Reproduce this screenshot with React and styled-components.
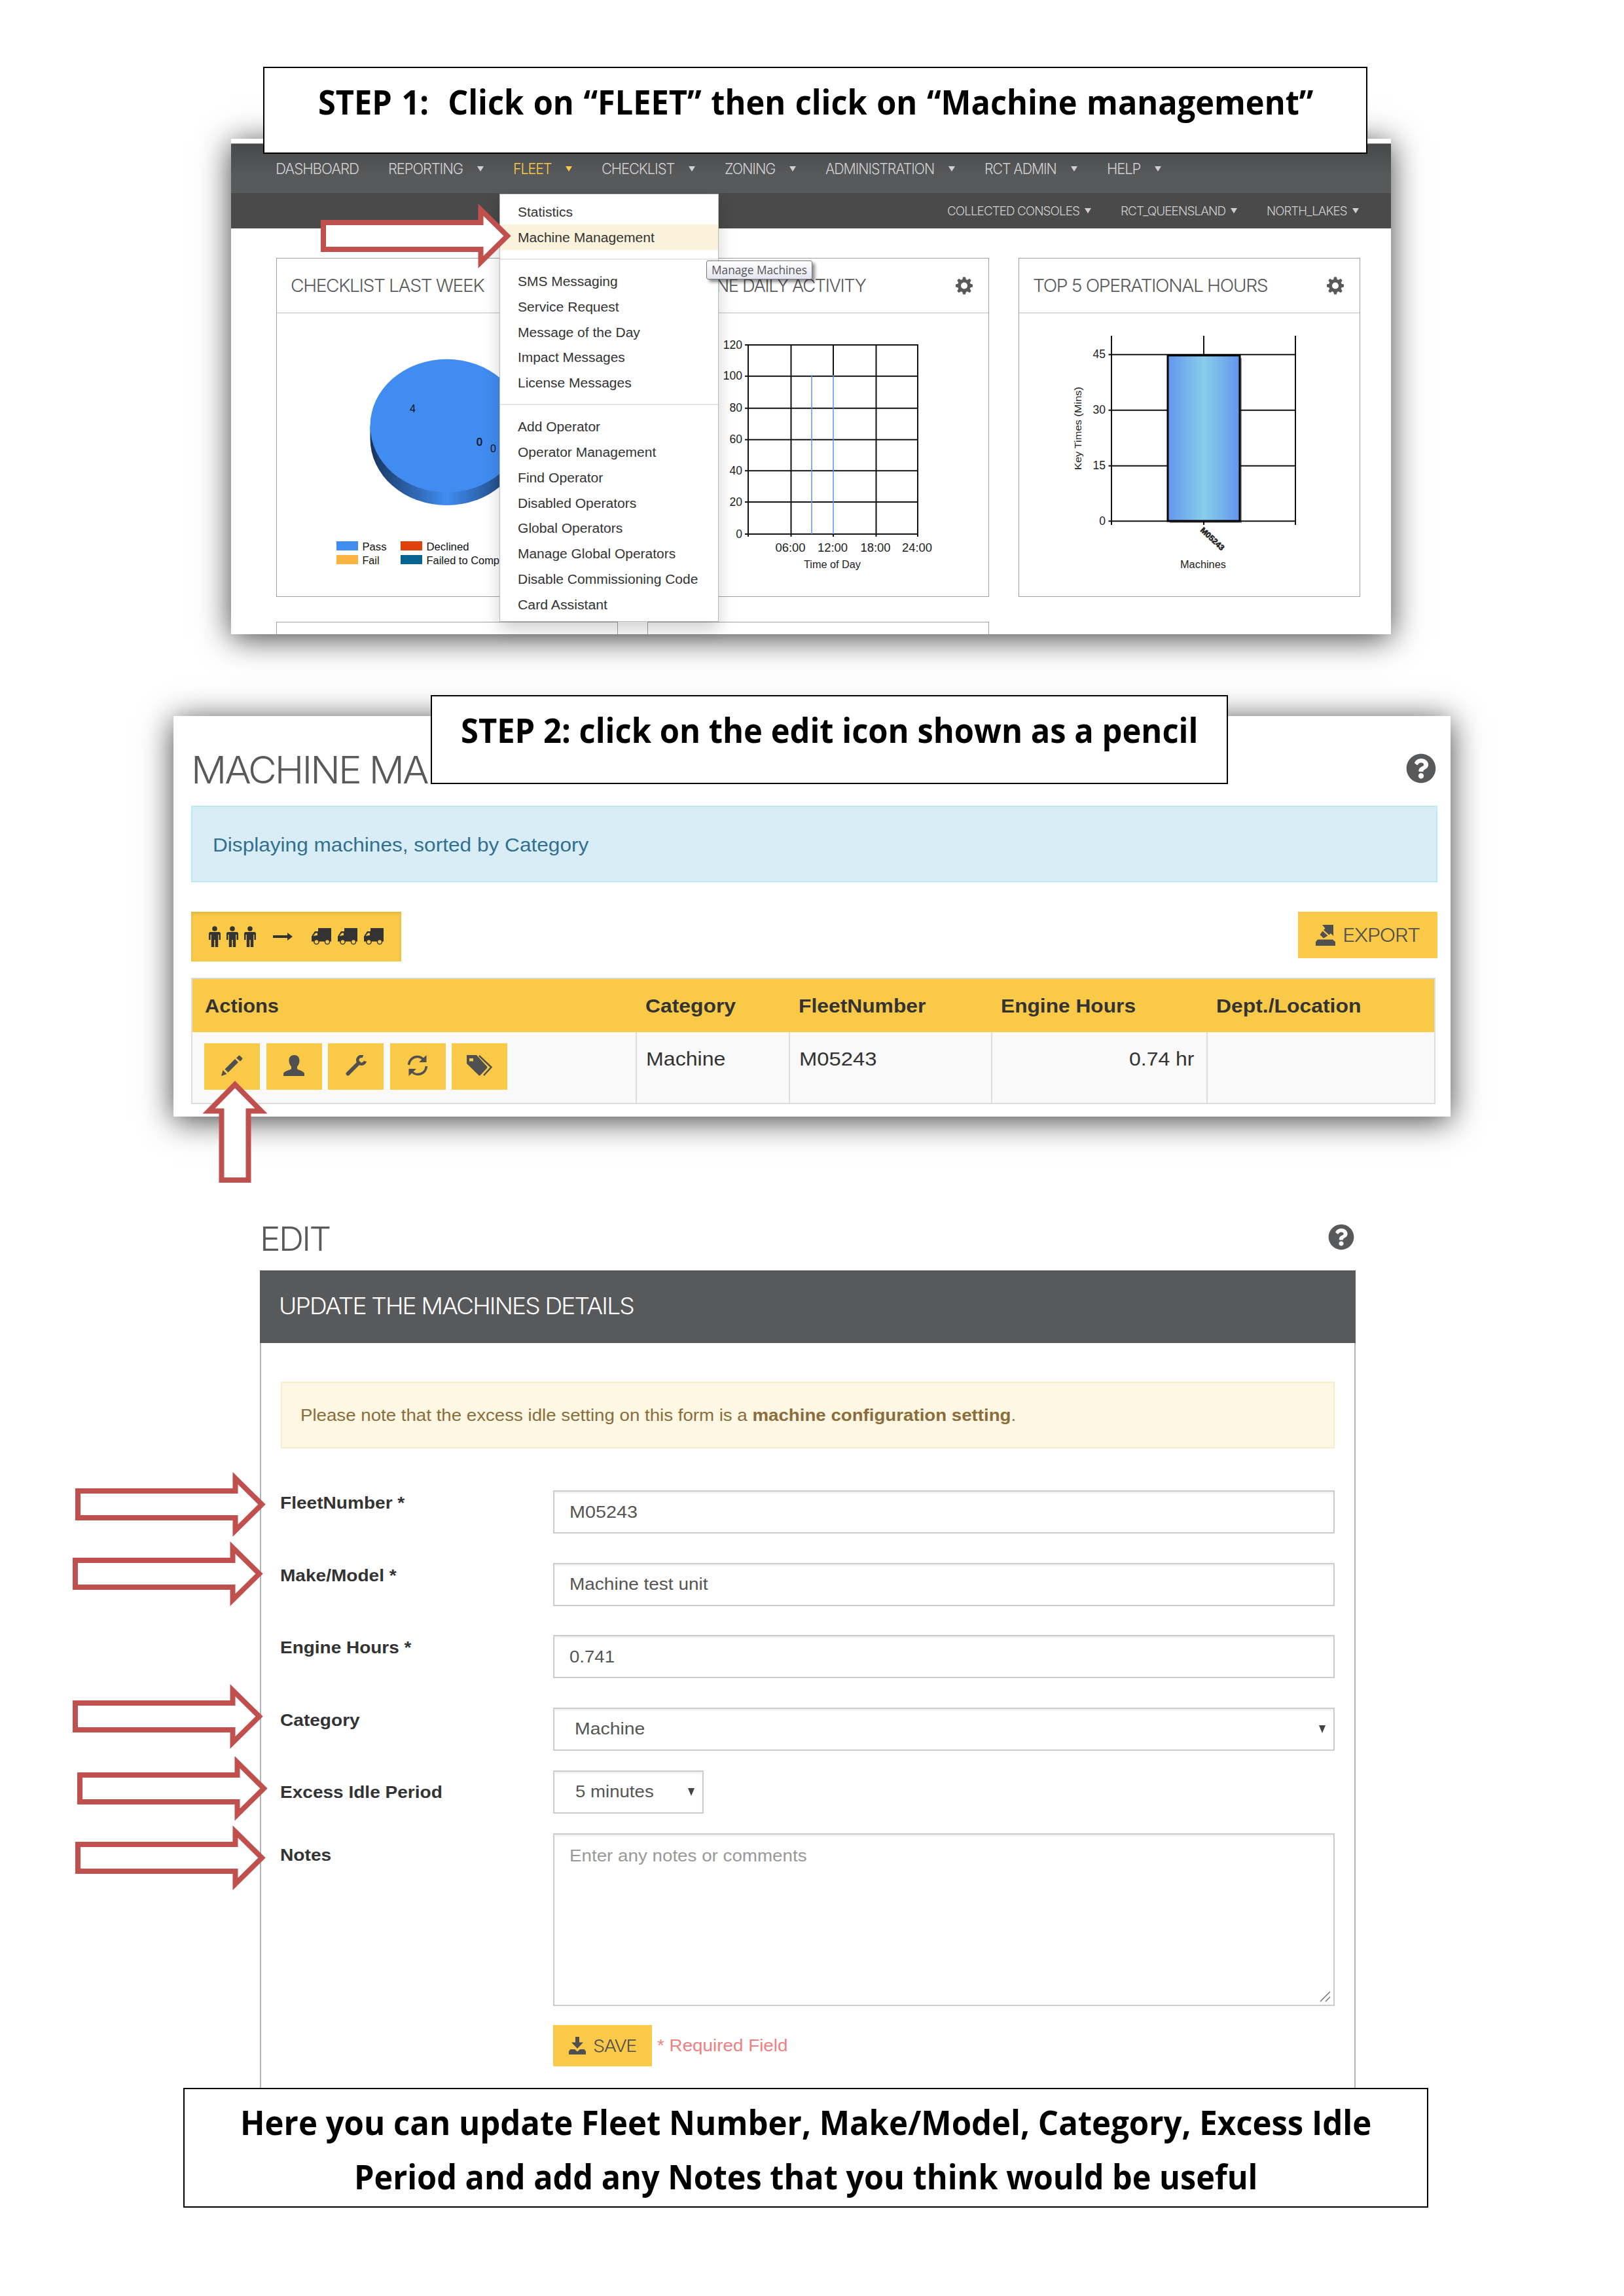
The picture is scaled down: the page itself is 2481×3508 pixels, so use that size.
import { useLayoutEffect, useRef, useState } from 'react';
import styled, { createGlobalStyle } from 'styled-components';
import { FaQuestionCircle } from 'react-icons/fa';

const sans = '"Liberation Sans", Arial, sans-serif';
const light = 'Inter, "Liberation Sans", sans-serif';

const GlobalStyle = createGlobalStyle`
  * {
    box-sizing: border-box;
  }

  body {
    margin: 0;
    background: #fff;
    font-family: ${sans};
  }
`;

const Page = styled.main`
  position: relative;
  display: flex;
  flex-direction: column;
  width: 2481px;
  height: 3508px;
  overflow: hidden;
  background: #fff;
`;

/* text fitted to a given width */

const FitBox = styled.span`
  display: inline-block;
  width: ${({ $width }) => $width}px;
  white-space: pre;
  text-align: left;
  flex: none;
`;

const FitText = styled.span`
  display: inline-block;
  transform-origin: 0 50%;
`;

const Fit = ({ width, children }) => {
  const ref = useRef(null);
  const [scale, setScale] = useState(1);

  useLayoutEffect(() => {
    setScale(width / ref.current.offsetWidth);
  }, [width]);

  return (
    <FitBox $width={width}>
      <FitText ref={ref} style={{ transform: `scaleX(${scale})` }}>
        {children}
      </FitText>
    </FitBox>
  );
};

/* callouts and arrows that lie over the screens */

const Callout = styled.div`
  border: 2px solid #000;
  background: #fff;
  color: #000;
  font-family: 'Open Sans', 'Noto Sans', sans-serif;
  font-size: 52px;
  font-weight: 700;
  line-height: 83px;
  text-align: center;
`;

const StepOne = styled(Callout)`
  position: absolute;
  left: 402px;
  top: 102px;
  width: 1687px;
  height: 133px;
  padding-top: 9px;
  word-spacing: 2px;
`;

const StepTwo = styled(Callout)`
  position: absolute;
  left: 658px;
  top: 1062px;
  width: 1218px;
  height: 136px;
  padding-top: 9px;
`;

const Summary = styled(Callout)`
  position: relative;
  display: flex;
  flex-direction: column;
  align-items: center;
  flex: none;
  width: 1902px;
  height: 183px;
  margin-left: 280px;
  padding-top: 8px;
`;

const ArrowSvg = styled.svg`
  position: absolute;
  left: ${({ $x }) => $x}px;
  top: ${({ $y }) => $y}px;
  fill: #fff;
  stroke: #c0504d;
  stroke-width: 8;
  stroke-miterlimit: 5;
`;

const RightArrow = ({ x, y }) => (
  <ArrowSvg $x={x} $y={y} width="291" height="101" viewBox="0 0 291 101">
    <path d="M4 30H244.500V10.500L285 50.500L244.500 90.500V71H4Z" />
  </ArrowSvg>
);

const UpArrow = ({ x, y }) => (
  <ArrowSvg $x={x} $y={y} width="100" height="156" viewBox="0 0 100 156">
    <path d="M29.500 152V46.500H10L50 6L90 46.500H70.500V152Z" />
  </ArrowSvg>
);

/* step 1: dashboard */

const Screen = styled.section`
  position: relative;
  flex: none;
  background: #fff;
  box-shadow: 0 6px 46px rgba(0, 0, 0, 0.75);
`;

const Dashboard = styled(Screen)`
  width: 1772px;
  height: 757px;
  margin: 212px 0 0 353px;
  padding-top: 7px;
`;

const NavBar = styled.nav`
  display: flex;
  align-items: center;
  gap: 45px;
  height: 76px;
  padding-left: 68px;
  border-top: 1px solid #888;
  background: linear-gradient(#48494a, #58595b 65%);
  font-family: ${light};
  font-size: 22.5px;
  font-weight: 300;
  letter-spacing: -0.05em;
`;

const NavItem = styled.span`
  display: flex;
  align-items: center;
  gap: ${({ $gap }) => $gap || 22}px;
  color: ${({ $active }) => ($active ? '#f9c947' : '#d0d0d0')};
`;

const Caret = styled.i`
  border: 5.5px solid transparent;
  border-top: 8px solid currentColor;
  border-bottom: 0;
`;

const SubNav = styled.div`
  display: flex;
  align-items: center;
  justify-content: flex-end;
  gap: 45px;
  height: 54px;
  padding-right: 49px;
  background: #4a4a4a;
  font-family: ${light};
  font-size: 18.5px;
  font-weight: 300;
  letter-spacing: -0.05em;
`;

const Cards = styled.div`
  display: grid;
  grid-template-columns: repeat(3, 521.500px);
  grid-template-rows: 518px 100px;
  gap: 38px 45.500px;
  height: 620px;
  padding: 45px 0 0 69px;
  overflow: hidden;
`;

const Card = styled.article`
  border: 1px solid #a0a0a0;
  background: #fff;
`;

const CardHeader = styled.header`
  display: flex;
  align-items: center;
  justify-content: space-between;
  height: 84px;
  padding: 0 24px 0 21px;
  border-bottom: 2px solid #ddd;
  color: #58595b;
  font-family: ${light};
  font-size: 27px;
  font-weight: 300;
  letter-spacing: -0.05em;
`;

const Chart = styled.svg`
  display: block;
  font-family: ${sans};
`;

const Menu = styled.ul`
  position: absolute;
  left: 410px;
  top: 84px;
  width: 335px;
  height: 654px;
  margin: 0;
  padding: 7px 0 0;
  list-style: none;
  border: 1px solid #bbb;
  background: #fff;
  box-shadow: 0 12px 24px rgba(0, 0, 0, 0.18);
  color: #333;
  font-size: 20px;
`;

const MenuItem = styled.li`
  height: 38.750px;
  padding-left: 27px;
  line-height: 40px;
  background: ${({ $active }) => ($active ? '#fbf2dc' : 'none')};
`;

const MenuDivider = styled.li`
  height: 2px;
  margin: 13px 0 13.500px;
  background: #e5e5e5;
`;

const Tooltip = styled.div`
  position: absolute;
  left: 726px;
  top: 186px;
  width: 162px;
  height: 29px;
  padding-left: 7px;
  border: 1px solid #767676;
  border-radius: 3px;
  background: linear-gradient(#fff, #e4e5f0);
  box-shadow: 4px 4px 5px rgba(0, 0, 0, 0.45);
  color: #575757;
  font-family: 'Open Sans', 'Noto Sans', sans-serif;
  font-size: 18px;
  line-height: 27px;
`;

const menu = [
  [
    ['Statistics', 84],
    ['Machine Management', 209],
  ],
  [
    ['SMS Messaging', 153],
    ['Service Request', 155],
    ['Message of the Day', 187],
    ['Impact Messages', 164],
    ['License Messages', 174],
  ],
  [
    ['Add Operator', 126],
    ['Operator Management', 211],
    ['Find Operator', 130],
    ['Disabled Operators', 181],
    ['Global Operators', 160],
    ['Manage Global Operators', 241],
    ['Disable Commissioning Code', 275],
    ['Card Assistant', 137],
  ],
];

const navItems = [
  ['REPORTING', 114],
  ['FLEET', 58],
  ['CHECKLIST', 111],
  ['ZONING', 77],
  ['ADMINISTRATION', 166],
  ['RCT ADMIN', 110],
  ['HELP', 51],
];

const subItems = [
  ['COLLECTED CONSOLES', 202],
  ['RCT_QUEENSLAND', 160],
  ['NORTH_LAKES', 123],
];

const legend = [
  ['Pass', '#418cf0', 514, 827, 37],
  ['Fail', '#fcb441', 514, 848, 26],
  ['Declined', '#e0400a', 612, 827, 65],
  ['Failed to Complete', '#056492', 612, 848, 138],
];

const teeth = [0, 45, 90, 135, 180, 225, 270, 315];

const GearIcon = () => (
  <svg width="26" height="27" viewBox="-13 -13.500 26 27" fill="#58595b">
    <circle r="7.500" fill="none" stroke="#58595b" strokeWidth="5" />
    {teeth.map((angle) => (
      <path
        key={angle}
        d="M-3 -9L-1.800 -13.300H1.800L3 -9Z"
        transform={`rotate(${angle})`}
      />
    ))}
  </svg>
);

const PieChart = () => (
  <Chart width="519" height="431" viewBox="423 479 519 431">
    <defs>
      <linearGradient id="rim">
        <stop offset="0" stopColor="#17355c" />
        <stop offset="0.5" stopColor="#418cf0" />
        <stop offset="1" stopColor="#17355c" />
      </linearGradient>
    </defs>
    <path
      d="M565.500 651v19.500a117 101.500 0 0 0 234 0V651z"
      fill="url(#rim)"
    />
    <ellipse cx="682.500" cy="650.500" rx="117" ry="101.700" fill="#418cf0" />
    <g fontSize="16" fill="#111">
      <text x="626" y="630">
        4
      </text>
      <text x="728" y="681" stroke="#111" strokeWidth="0.500">
        0
      </text>
      <text x="749" y="691">
        0
      </text>
      {legend.map(([label, color, x, y, w]) => (
        <g key={label}>
          <rect x={x} y={y} width="33" height="14" fill={color} />
          <text
            x={x + 39.5}
            y={y + 13.5}
            textLength={w}
            lengthAdjust="spacingAndGlyphs"
          >
            {label}
          </text>
        </g>
      ))}
    </g>
  </Chart>
);

const activityRows = [527, 574.7, 623.7, 671.7, 719.3, 767, 816];
const activityCols = [1143, 1208.5, 1273, 1338.5, 1402];

const ActivityChart = () => (
  <Chart width="519" height="431" viewBox="990 479 519 431">
    <g stroke="#111" strokeWidth="2">
      {activityRows.map((y) => (
        <path key={y} d={`M1138 ${y}H1403`} />
      ))}
      <path d="M1143 527V820M1208.500 527V820M1273 527V574M1273 816V820M1338.500 527V820M1402 527V820" />
    </g>
    <path
      d="M1240 573V816M1273 573V816"
      stroke="#5b97e6"
      strokeWidth="1.500"
    />
    <g fontSize="17.500" fill="#222">
      {activityRows.map((y, i) => (
        <text key={y} x="1134" y={y + 5.5} textAnchor="end">
          {120 - i * 20}
        </text>
      ))}
      {['06:00', '12:00', '18:00', '24:00'].map((t, i) => (
        <text
          key={t}
          x={activityCols[i + 1] - 24}
          y="842.500"
          textLength="46"
          lengthAdjust="spacingAndGlyphs"
        >
          {t}
        </text>
      ))}
      <text
        x="1228"
        y="867.500"
        fontSize="16"
        textLength="87"
        lengthAdjust="spacingAndGlyphs"
      >
        Time of Day
      </text>
    </g>
  </Chart>
);

const hourRows = [541.7, 626.7, 711.7, 796.3];

const HoursChart = () => (
  <Chart width="519" height="431" viewBox="1557 479 519 431">
    <defs>
      <linearGradient id="bar">
        <stop offset="0" stopColor="#6495ed" />
        <stop offset="0.500" stopColor="#87ceeb" />
        <stop offset="1" stopColor="#6495ed" />
      </linearGradient>
    </defs>
    <g stroke="#111" strokeWidth="2">
      {hourRows.map((y) => (
        <path key={y} d={`M1693.500 ${y}H1980`} />
      ))}
      <path d="M1698 513V802M1839 513V802M1979 513V802" />
    </g>
    <rect x="1787" y="547" width="110" height="252" fill="#000" opacity="0.4" />
    <rect
      x="1784"
      y="543"
      width="110"
      height="253"
      fill="url(#bar)"
      stroke="#000"
      strokeWidth="3"
    />
    <g fontSize="17.500" fill="#222">
      {hourRows.map((y, i) => (
        <text key={y} x="1689" y={y + 5.5} textAnchor="end">
          {45 - i * 15}
        </text>
      ))}
      <text
        transform="translate(1651.500 718) rotate(-90)"
        fontSize="15"
        textLength="127"
        lengthAdjust="spacingAndGlyphs"
      >
        Key Times (Mins)
      </text>
      <text
        transform="translate(1833 811) rotate(43)"
        fontSize="12"
        fontWeight="bold"
        stroke="#222"
        strokeWidth="0.600"
        textLength="45"
        lengthAdjust="spacingAndGlyphs"
      >
        M05243
      </text>
      <text
        x="1803"
        y="867.500"
        fontSize="16"
        textLength="70"
        lengthAdjust="spacingAndGlyphs"
      >
        Machines
      </text>
    </g>
  </Chart>
);

const DashboardScreen = () => (
  <Dashboard>
    <NavBar>
      <NavItem>
        <Fit width={127}>DASHBOARD</Fit>
      </NavItem>
      {navItems.map(([label, width]) => (
        <NavItem key={label} $active={label === 'FLEET'}>
          <Fit width={width}>{label}</Fit>
          <Caret />
        </NavItem>
      ))}
    </NavBar>
    <SubNav>
      {subItems.map(([label, width]) => (
        <NavItem key={label} $gap={8}>
          <Fit width={width}>{label}</Fit>
          <Caret />
        </NavItem>
      ))}
    </SubNav>
    <Cards>
      <Card>
        <CardHeader>
          <Fit width={295}>CHECKLIST LAST WEEK</Fit>
        </CardHeader>
        <PieChart />
      </Card>
      <Card>
        <CardHeader>
          <Fit width={312}>MACHINE DAILY ACTIVITY</Fit>
          <GearIcon />
        </CardHeader>
        <ActivityChart />
      </Card>
      <Card>
        <CardHeader>
          <Fit width={358}>TOP 5 OPERATIONAL HOURS</Fit>
          <GearIcon />
        </CardHeader>
        <HoursChart />
      </Card>
      <Card />
      <Card />
    </Cards>
    <Menu>
      {menu.map((group, i) => [
        i > 0 && <MenuDivider key={i} />,
        ...group.map(([label, width]) => (
          <MenuItem key={label} $active={label === 'Machine Management'}>
            <Fit width={width}>{label}</Fit>
          </MenuItem>
        )),
      ])}
    </Menu>
    <Tooltip>
      <Fit width={146}>Manage Machines</Fit>
    </Tooltip>
  </Dashboard>
);

/* step 2: machine list */

const MachineList = styled(Screen)`
  width: 1951px;
  height: 612px;
  margin: 125px 0 0 265px;
  padding: 27px 20px 0 27px;
`;

const TitleRow = styled.div`
  display: flex;
  align-items: center;
  justify-content: space-between;
  height: ${({ $height }) => $height}px;
  padding-right: 2px;
  color: #58595b;
  font-family: ${light};
  font-size: ${({ $size }) => $size}px;
  font-weight: 300;
  letter-spacing: -0.05em;
`;

const HelpIcon = styled(FaQuestionCircle)`
  width: ${({ $size }) => $size}px;
  height: ${({ $size }) => $size}px;
  margin-bottom: 5px;
`;

const Info = styled.div`
  height: 117px;
  padding-left: 31px;
  border: 2px solid #bce8f1;
  background: #d9edf7;
  color: #31708f;
  font-size: 30px;
  line-height: 115px;
`;

const Toolbar = styled.div`
  display: flex;
  align-items: flex-start;
  justify-content: space-between;
  height: 76px;
  margin: 45px 0 25px;
`;

const Button = styled.button`
  display: flex;
  align-items: center;
  gap: 11px;
  height: ${({ $height }) => $height}px;
  padding: 0 ${({ $pad }) => $pad}px;
  border: 0;
  background: #f9c947;
  color: #505050;
  font-family: ${light};
  font-size: ${({ $size }) => $size || 29}px;
  font-weight: 300;
  letter-spacing: -0.05em;
`;

const AssignButton = styled(Button)`
  gap: 0;
  box-shadow: inset 0 3px 5px rgba(0, 0, 0, 0.1);
  color: #333;
`;

const People = styled.span`
  display: flex;
  gap: 9px;
`;

const Trucks = styled.span`
  display: flex;
  gap: 10px;
`;

const LongArrow = styled.svg`
  margin: 0 29px 0 26px;
`;

const Table = styled.div`
  display: grid;
  grid-template-columns: 677px 234px 309px 328.500px 1fr;
  grid-template-rows: 81px 108px;
  width: 1901px;
  border: 2px solid #ddd;
  border-top-color: #d8d4cc;
  color: #333;
  font-size: 30px;
`;

const HeadCell = styled.div`
  padding-left: 15px;
  background: #f9c947;
  font-weight: bold;
  line-height: 81px;

  &:first-child {
    padding-left: 19px;
  }
`;

const Cell = styled.div`
  padding: 21px 19px 0 14px;
  border-left: 2px solid #ddd;
  background: #f9f9f9;
  line-height: 39px;
  text-align: ${({ $right }) => ($right ? 'right' : 'left')};
`;

const ActionsCell = styled.div`
  display: flex;
  gap: 9.500px;
  padding: 17px 0 0 18px;
  background: #f9f9f9;
`;

const ActionButton = styled(Button)`
  justify-content: center;
  width: 85px;
  padding-bottom: 4px;
`;

const PersonIcon = () => (
  <svg width="18" height="32" viewBox="0 0 18 32" fill="#333">
    <circle cx="9" cy="4" r="3.800" />
    <path d="M2.500 9H15.500Q18 9 18 11.500V21H15.500V13H14.200V32H9.800V21H8.200V32H3.800V13H2.500V21H0V11.500Q0 9 2.500 9Z" />
  </svg>
);

const TruckIcon = () => (
  <svg width="30" height="26" viewBox="0 0 30 26" fill="#333">
    <path d="M10 0H30V20.500H0V12.500L5 5H10Z" />
    <path d="M2.500 12L6 7.500H9V11Z" fill="#f9c947" />
    <g fill="#f9c947" stroke="#333" strokeWidth="1.500">
      <circle cx="7.500" cy="21" r="3.600" />
      <circle cx="24" cy="21" r="3.600" />
    </g>
  </svg>
);

const PencilIcon = () => (
  <svg width="33" height="32" viewBox="0 0 33 32" fill="currentColor">
    <path d="M0 32L2.500 23L8.500 29ZM5.500 21.500L21 6L26 11L10.500 26.500ZM23 4.500L26.500 1Q27.500 0 28.500 1L32 4.500Q33 5.500 32 6.500L29 9.500Z" />
  </svg>
);

const UserIcon = () => (
  <svg width="32" height="32" viewBox="0 0 32 32" fill="currentColor">
    <path d="M16.500 0c5 0 8 3 8 8.500 0 4-1.500 7-3.500 9v3.500c1 2 10.500 3 11 7.500V32H0v-3.500C.5 24 11 23 12 21v-3.500C10 15.500 8.500 12.500 8.500 8.500 8.500 3 11.500 0 16.500 0z" />
  </svg>
);

const WrenchIcon = () => (
  <svg width="32" height="32" viewBox="0 0 32 32" fill="none">
    <g stroke="currentColor">
      <path d="M3.500 28.500L20 12" strokeWidth="6" strokeLinecap="round" />
      <path d="M26.500 2.200A6 6 0 1 0 30 9.500" strokeWidth="4.500" />
    </g>
  </svg>
);

const RefreshIcon = () => (
  <svg width="32" height="32" viewBox="0 0 32 32" fill="currentColor">
    <path
      d="M2.500 15C3.500 6.500 9.500 2.500 15.500 2.500c4 0 7 1.500 9.500 4.500M29.500 17c-1 8.500-7 12.500-13 12.500-4 0-7-1.500-9.500-4.500"
      fill="none"
      stroke="currentColor"
      strokeWidth="3.500"
    />
    <path d="M29.500 0v11H18zM2.500 32V21H14z" />
  </svg>
);

const TagsIcon = () => (
  <svg width="40" height="32" viewBox="0 0 40 32" fill="currentColor">
    <path
      d="M0 0H15L31 17.500Q32 19 31 20L20.500 31Q19.500 32 18.500 31L0 13ZM4 5V9.500H10V5Z"
      fillRule="evenodd"
    />
    <path
      d="M19 1L37.500 18.500L26 31"
      fill="none"
      stroke="currentColor"
      strokeWidth="2.500"
    />
  </svg>
);

const ExportIcon = () => (
  <svg width="30" height="32" viewBox="0 0 30 32" fill="currentColor">
    <path d="M10 0H27V17L23 13L20.500 15.500L12 8L14.500 5.500ZM10.500 9.500L18.500 16.500L12 20.500L6.500 15ZM3 22.500H26L30 26V32H0V26Z" />
  </svg>
);

const SaveIcon = () => (
  <svg width="26" height="27" viewBox="0 0 26 27" fill="currentColor">
    <path d="M10 0H16V8.500H22L13 18L4 8.500H10ZM2.500 19H9L13 22.500L17 19H23.500L26 22V27H0V22Z" />
  </svg>
);

const MachineScreen = () => (
  <MachineList>
    <TitleRow $height={110} $size={58}>
      <Fit width={676}>MACHINE MANAGEMENT</Fit>
      <HelpIcon $size={46} />
    </TitleRow>
    <Info>
      <Fit width={574}>Displaying machines, sorted by Category</Fit>
    </Info>
    <Toolbar>
      <AssignButton $height={76} $pad={27}>
        <People>
          <PersonIcon />
          <PersonIcon />
          <PersonIcon />
        </People>
        <LongArrow width="30" height="12" viewBox="0 0 30 12" fill="#333">
          <path d="M0 4H22V0L30 6L22 12V8H0Z" />
        </LongArrow>
        <Trucks>
          <TruckIcon />
          <TruckIcon />
          <TruckIcon />
        </Trucks>
      </AssignButton>
      <Button $height={71} $pad={27}>
        <ExportIcon />
        <Fit width={118}>EXPORT</Fit>
      </Button>
    </Toolbar>
    <Table>
      <HeadCell>
        <Fit width={113}>Actions</Fit>
      </HeadCell>
      <HeadCell>
        <Fit width={138}>Category</Fit>
      </HeadCell>
      <HeadCell>
        <Fit width={194}>FleetNumber</Fit>
      </HeadCell>
      <HeadCell>
        <Fit width={206}>Engine Hours</Fit>
      </HeadCell>
      <HeadCell>
        <Fit width={221}>Dept./Location</Fit>
      </HeadCell>
      <ActionsCell>
        <ActionButton $height={71} $pad={0}>
          <PencilIcon />
        </ActionButton>
        <ActionButton $height={71} $pad={0}>
          <UserIcon />
        </ActionButton>
        <ActionButton $height={71} $pad={0}>
          <WrenchIcon />
        </ActionButton>
        <ActionButton $height={71} $pad={0}>
          <RefreshIcon />
        </ActionButton>
        <ActionButton $height={71} $pad={0}>
          <TagsIcon />
        </ActionButton>
      </ActionsCell>
      <Cell>
        <Fit width={121}>Machine</Fit>
      </Cell>
      <Cell>
        <Fit width={118}>M05243</Fit>
      </Cell>
      <Cell $right>
        <Fit width={99}>0.74 hr</Fit>
      </Cell>
      <Cell />
    </Table>
  </MachineList>
);

/* step 3: edit form */

const EditSection = styled.section`
  flex: none;
  width: 1674px;
  height: 1346px;
  margin: 138px 0 0 397px;
`;

const PanelHeader = styled.h2`
  height: 111px;
  margin: 0;
  padding-left: 29px;
  background: #58595b;
  color: #fff;
  font-family: ${light};
  font-size: 35px;
  font-weight: 300;
  letter-spacing: -0.05em;
  line-height: 108px;
`;

const PanelBody = styled.div`
  height: 1138px;
  padding: 59px 30px 0;
  border: solid #b4b4b4;
  border-width: 0 2px;
`;

const Warning = styled.div`
  height: 102px;
  margin-bottom: 64px;
  padding-left: 28px;
  border: 2px solid #faebcc;
  background: #fdf7e3;
  color: #8a6d3b;
  font-size: 26.5px;
  line-height: 99px;
`;

const FormRow = styled.div`
  display: flex;
  height: ${({ $height }) => $height}px;
`;

const Label = styled.label`
  width: 417px;
  margin-left: -1px;
  padding-top: ${({ $offset }) => $offset || 1}px;
  color: #333;
  font-size: 26px;
  font-weight: bold;
  line-height: 36px;
`;

const Field = styled.div`
  display: flex;
  align-items: center;
  justify-content: space-between;
  flex: ${({ $width }) => ($width ? 'none' : 1)};
  width: ${({ $width }) => ($width ? `${$width}px` : 'auto')};
  height: 66px;
  padding: 0 12px 0 ${({ $pad }) => $pad || 23}px;
  border: 2px solid #ccc;
  background: #fff;
  box-shadow: inset 0 2px 3px rgba(0, 0, 0, 0.075);
  color: #555;
  font-size: 26px;
`;

const Notes = styled(Field)`
  align-items: flex-start;
  height: 264px;
  padding: 16px 4px 4px 23px;
  color: #999;
  line-height: 32px;
`;

const Grip = styled.svg`
  align-self: flex-end;
`;

const SelectCaret = styled.i`
  border: 5.5px solid transparent;
  border-top: 12px solid #444;
  border-bottom: 0;
`;

const SaveRow = styled.div`
  display: flex;
  align-items: center;
  gap: 8px;
  margin: 29px 0 0 416px;
  color: #f08080;
  font-size: 26px;
`;

const EditScreen = () => (
  <EditSection>
    <TitleRow $height={97} $size={51}>
      <Fit width={107}>EDIT</Fit>
      <HelpIcon $size={40} />
    </TitleRow>
    <PanelHeader>
      <Fit width={542}>UPDATE THE MACHINES DETAILS</Fit>
    </PanelHeader>
    <PanelBody>
      <Warning>
        <Fit width={1093}>
          Please note that the excess idle setting on this form is a{' '}
          <b>machine configuration setting</b>.
        </Fit>
      </Warning>
      <FormRow $height={110.5}>
        <Label>
          <Fit width={190}>FleetNumber *</Fit>
        </Label>
        <Field>
          <Fit width={104}>M05243</Fit>
        </Field>
      </FormRow>
      <FormRow $height={110.5}>
        <Label>
          <Fit width={178}>Make/Model *</Fit>
        </Label>
        <Field>
          <Fit width={212}>Machine test unit</Fit>
        </Field>
      </FormRow>
      <FormRow $height={110.5}>
        <Label>
          <Fit width={200}>Engine Hours *</Fit>
        </Label>
        <Field>
          <Fit width={69}>0.741</Fit>
        </Field>
      </FormRow>
      <FormRow $height={96}>
        <Label>
          <Fit width={122}>Category</Fit>
        </Label>
        <Field $pad={31}>
          <Fit width={107}>Machine</Fit>
          <SelectCaret />
        </Field>
      </FormRow>
      <FormRow $height={96}>
        <Label $offset={15}>
          <Fit width={248}>Excess Idle Period</Fit>
        </Label>
        <Field $width={230} $pad={32}>
          <Fit width={120}>5 minutes</Fit>
          <SelectCaret />
        </Field>
      </FormRow>
      <FormRow $height={264}>
        <Label $offset={15}>
          <Fit width={78}>Notes</Fit>
        </Label>
        <Notes>
          <Fit width={363}>Enter any notes or comments</Fit>
          <Grip width="17" height="17" viewBox="0 0 17 17" stroke="#777">
            <path d="M1 16L16 1M9 16L16 9" strokeWidth="1.500" />
          </Grip>
        </Notes>
      </FormRow>
      <SaveRow>
        <Button $height={63} $pad={24} $size={26}>
          <SaveIcon />
          <Fit width={66}>SAVE</Fit>
        </Button>
        <Fit width={199}>* Required Field</Fit>
      </SaveRow>
    </PanelBody>
  </EditSection>
);

const App = () => (
  <Page>
    <GlobalStyle />
    <DashboardScreen />
    <MachineScreen />
    <EditScreen />
    <Summary>
      <Fit width={1728}>
        Here you can update Fleet Number, Make/Model, Category, Excess Idle
      </Fit>
      <Fit width={1380}>
        Period and add any Notes that you think would be useful
      </Fit>
    </Summary>

    <StepOne>
      <Fit width={1520}>
        STEP 1:{'  '}Click on “FLEET” then click on “Machine management”
      </Fit>
    </StepOne>
    <StepTwo>
      <Fit width={1126}>STEP 2: click on the edit icon shown as a pencil</Fit>
    </StepTwo>
    <RightArrow x={490} y={310} />
    <UpArrow x={309} y={1651} />
    <RightArrow x={115} y={2248} />
    <RightArrow x={111} y={2354} />
    <RightArrow x={111} y={2572} />
    <RightArrow x={118} y={2682} />
    <RightArrow x={115} y={2788} />
  </Page>
);

export default App;
